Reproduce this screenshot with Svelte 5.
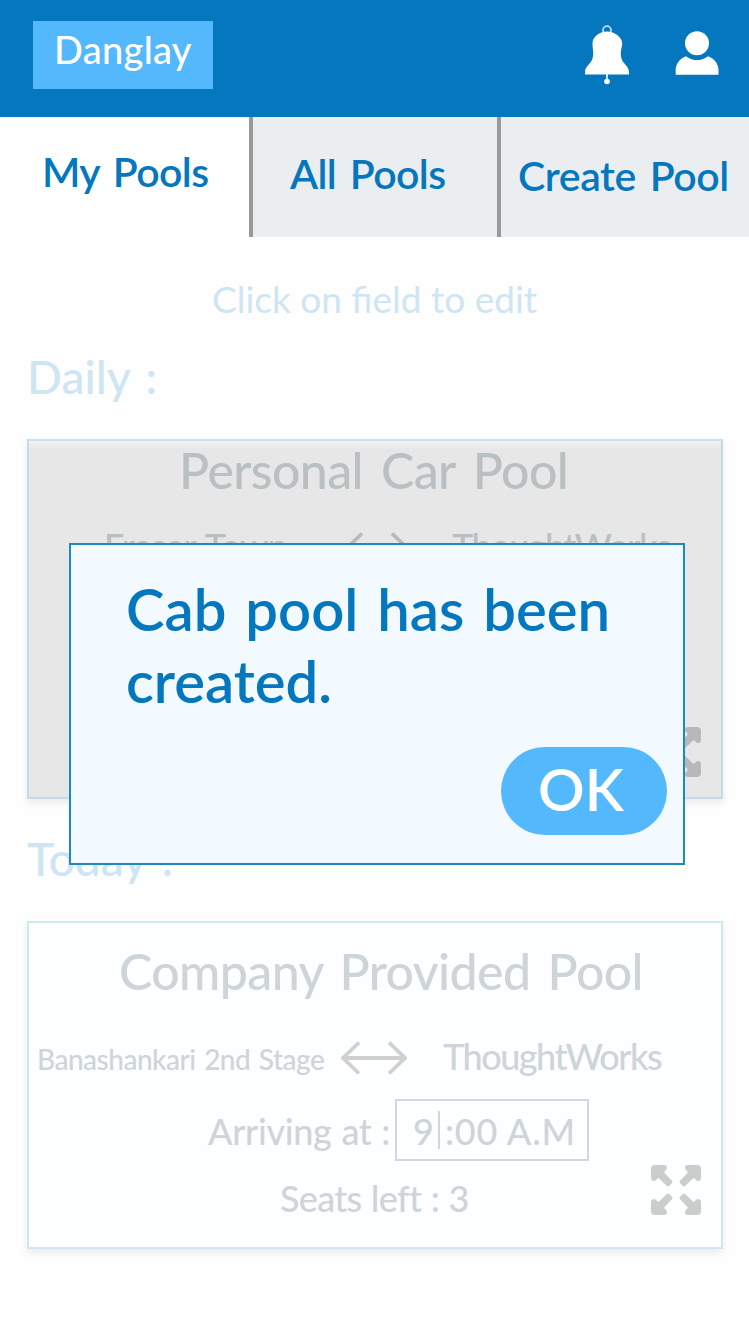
<script>
  const tabs = [
    { name: 'My Pools', cls: 'mine' },
    { name: 'All Pools', cls: 'all' },
    { name: 'Create Pool', cls: 'create' }
  ];
</script>

{#snippet expand()}
  <svg class="expand" viewBox="0 0 50 50" aria-hidden="true">
    {#each [0, 90, 180, 270] as angle}
      <path
        transform="rotate({angle} 25 25)"
        d="M4 0H12.500C16.500 0 17 3.500 14.500 5.500 13.200 6.500 13 7.500 14 8.600L20.800 15.600Q22.200 17 20.900 18.300L18.300 20.900Q17 22.200 15.600 20.800L8.600 14C7.500 13 6.500 13.200 5.500 14.500 3.500 17 0 16.500 0 12.500V4Q0 0 4 0Z"
      />
    {/each}
  </svg>
{/snippet}

{#snippet arrows()}
  <svg class="arrows" viewBox="0 0 66 34" aria-hidden="true">
    <path d="M2 17H64M18 1.5 2 17 18 32.5M48 1.5 64 17 48 32.5" />
  </svg>
{/snippet}

<div class="app">
  <header>
    <div class="logo">Danglay</div>
    <div class="actions">
      <svg class="bell" viewBox="0 0 44 60" aria-label="Notifications">
        <circle cx="22" cy="5.2" r="4" fill="none" stroke="#fff" stroke-opacity=".75" stroke-width="1.8" />
        <path
          d="M17 7.2Q22 5.8 27 7.2C33 9.5 37.2 13.5 37.2 18.5 37.2 22 36 24 35.8 27.5 35.7 32 36.6 35 38.5 37.5 41 40.5 44 43 44 47V49.5H0V47C0 43 3 40.5 5.500 37.5 7.400 35 8.300 32 8.200 27.5 8 24 7.500 22 7.500 18.5 7.500 13.5 11 9.5 17 7.2Z"
          fill="#fff"
        />
        <path d="M22 49v6" stroke="#fff" stroke-opacity=".8" stroke-width="2" />
        <circle cx="22" cy="56.5" r="2.8" fill="#fff" />
      </svg>
      <svg class="user" viewBox="0 0 44 44" aria-label="Profile">
        <circle cx="22" cy="12.3" r="12" fill="#fff" />
        <path d="M11 25.2Q22 33 33 25.2C39.5 27.5 43.5 33 43.5 39V43.7H.7V39C.7 33 4.700 27.5 11 25.2Z" fill="#fff" />
      </svg>
    </div>
  </header>

  <nav>
    {#each tabs as tab}
      <div class="tab {tab.cls}">{tab.name}</div>
    {/each}
  </nav>

  <main>
    <p class="hint">Click on field to edit</p>

    <h2 class="daily">Daily :</h2>
    <section class="card personal">
      <h3>Personal Car Pool</h3>
      <div class="route">
        <span class="from">Fraser Town</span>
        {@render arrows()}
        <span class="to">ThoughtWorks</span>
      </div>
      {@render expand()}
    </section>

    <h2 class="today">Today :</h2>
    <section class="card company">
      <h3>Company Provided Pool</h3>
      <div class="route">
        <span class="from">Banashankari 2nd Stage</span>
        {@render arrows()}
        <span class="to">ThoughtWorks</span>
      </div>
      <div class="arrival">
        <span class="label">Arriving at :</span>
        <div class="time"><span>9</span><i></i><span class="minutes">:00 A.M</span></div>
      </div>
      <p class="seats">Seats left : 3</p>
      {@render expand()}
    </section>
  </main>

  <div class="dialog" role="alertdialog">
    <p>Cab pool has been<br /><span>created.</span></p>
    <button>OK</button>
  </div>
</div>

<style>
  :global(body) {
    background: #fefefe;
  }
  .app {
    position: relative;
    width: 749px;
    height: 1341px;
    overflow: hidden;
    font-family: Lato, 'Liberation Sans', sans-serif;
    white-space: nowrap;
  }
  h2, h3, p {
    margin: 0;
    font-weight: 500;
  }
  header {
    box-sizing: border-box;
    height: 117px;
    padding: 21px 30px 0 33px;
    display: flex;
    justify-content: space-between;
    background: #0577be;
  }
  .logo {
    box-sizing: border-box;
    width: 180px;
    height: 68px;
    padding-left: 21px;
    background: #54b8fd;
    color: #fff;
    font-size: 38px;
    font-weight: 500;
    line-height: 56px;
    letter-spacing: 0.3px;
  }
  .actions {
    display: flex;
    gap: 46px;
    padding-top: 4px;
  }
  .bell {
    width: 44px;
    height: 60px;
  }
  .user {
    width: 44px;
    height: 44px;
    margin-top: 6px;
  }
  nav {
    display: grid;
    grid-template-columns: 249px 248px 252px;
    height: 120px;
  }
  .tab {
    box-sizing: border-box;
    background: #ebeef1;
    color: #0577be;
    font-size: 41px;
    font-weight: 600;
    word-spacing: 4px;
    letter-spacing: -0.6px;
  }
  .tab + .tab {
    border-left: 4px solid #999;
  }
  .mine {
    background: #fff;
    padding-left: 42px;
    line-height: 110px;
  }
  .all {
    padding-left: 37px;
    line-height: 114px;
  }
  .tab.create {
    padding-left: 17px;
    line-height: 118px;
    letter-spacing: -0.4px;
  }
  main {
    padding: 36px 26px 0 27px;
  }
  .hint {
    padding: 1px 0 0 185px;
    font-size: 37px;
    font-weight: 400;
    line-height: 50px;
    color: #cee5f3;
  }
  h2 {
    font-size: 46px;
    line-height: 60px;
    color: #cee5f3;
  }
  .daily {
    margin: 23px 0 32px;
    letter-spacing: 0.1px;
    word-spacing: 4px;
  }
  .today {
    margin: 30px 0 32px;
    word-spacing: 4px;
  }
  .card {
    position: relative;
    box-sizing: border-box;
    border: 2px solid #cfe6f4;
    box-shadow: 0 4px 8px rgba(0, 0, 0, 0.08);
    color: #cdd5d8;
    font-size: 36px;
    font-weight: 500;
  }
  h3 {
    font-size: 50px;
    font-weight: 500;
  }
  .personal {
    height: 360px;
    background: linear-gradient(#f3f3f3, #e7e7e7 8px);
    border-color: #c5dae8;
    border-top-color: #cbe1f0;
    color: #b9c0c3;
  }
  .personal h3 {
    padding-left: 150px;
    line-height: 59px;
    letter-spacing: -0.6px;
    word-spacing: 6px;
  }
  .personal .route {
    margin-top: 21px;
  }
  .company {
    height: 328px;
    background: #fdfeff;
  }
  .company h3 {
    padding: 18px 0 0 90px;
    line-height: 60px;
    letter-spacing: -0.6px;
    word-spacing: 5px;
  }
  .company .route {
    margin-top: 30px;
  }
  .route {
    display: flex;
    height: 50px;
    line-height: 50px;
  }
  .arrows {
    width: 66px;
    height: 34px;
    margin-top: 10px;
    fill: none;
    stroke: #d0d0d0;
    stroke-width: 3.8;
  }
  .personal .arrows {
    margin-top: 11px;
    stroke: #b9b9b9;
  }
  .personal .from {
    width: 315px;
    box-sizing: border-box;
    padding-left: 75px;
    letter-spacing: -1px;
    word-spacing: 3px;
  }
  .company .from {
    width: 312px;
    box-sizing: border-box;
    padding-left: 8px;
    font-size: 28px;
    line-height: 56px;
    letter-spacing: -0.5px;
    word-spacing: 2px;
  }
  .to {
    padding-left: 36px;
    letter-spacing: -1.5px;
  }
  .personal .to {
    padding-left: 42px;
  }
  .arrival {
    display: flex;
    margin-top: 18px;
    height: 62px;
    line-height: 65px;
  }
  .label {
    box-sizing: border-box;
    width: 366px;
    padding-left: 179px;
    letter-spacing: -0.3px;
    word-spacing: 1px;
  }
  .time {
    box-sizing: border-box;
    width: 194px;
    padding-left: 16px;
    display: flex;
    border: 2px solid #cfd8da;
    line-height: 61px;
  }
  .time i {
    width: 2px;
    height: 38px;
    margin: 10px 5px 0 4px;
    background: #cfd8da;
  }
  .minutes {
    letter-spacing: 0.8px;
  }
  .seats {
    margin-top: 12px;
    padding-left: 251px;
    line-height: 50px;
    letter-spacing: -0.7px;
    word-spacing: 1px;
  }
  .expand {
    position: absolute;
    right: 20px;
    bottom: 32px;
    width: 50px;
    height: 50px;
    fill: #cbcccc;
  }
  .personal .expand {
    bottom: 20px;
    fill: #b8b8b8;
  }
  .dialog {
    position: absolute;
    left: 69px;
    top: 543px;
    box-sizing: border-box;
    width: 616px;
    height: 322px;
    padding: 28px 16px 0 55px;
    display: flex;
    flex-direction: column;
    border: 2px solid #1e87c6;
    background: #f2f9ff;
    color: #0577be;
    font-size: 58px;
    line-height: 72px;
  }
  .dialog p {
    font-weight: 600;
    letter-spacing: 0;
    word-spacing: 4.5px;
  }
  .dialog button {
    align-self: flex-end;
    width: 166px;
    height: 88px;
    margin-top: 30px;
    padding: 0 6px 5px 0;
    border: 0;
    border-radius: 44px;
    background: #54b8fd;
    color: #fff;
    font: 600 58px Lato, 'Liberation Sans', sans-serif;
  }
</style>
